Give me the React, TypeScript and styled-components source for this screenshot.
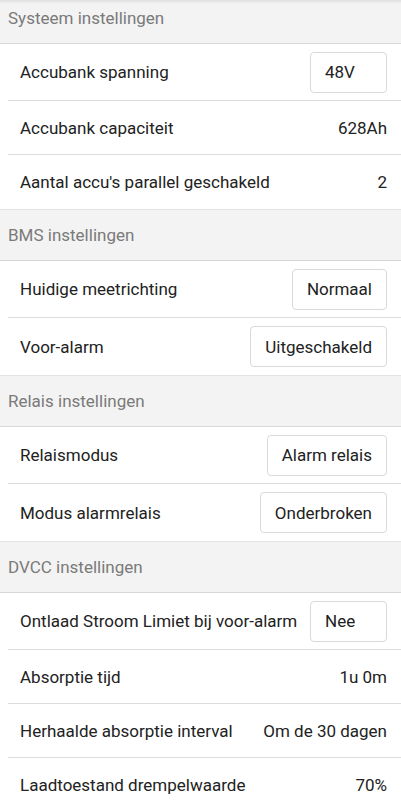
import React from 'react';
import styled, {createGlobalStyle} from 'styled-components';

const GlobalStyle = createGlobalStyle`
  html, body {
    margin: 0;
    padding: 0;
    background: #fff;
  }
  body {
    font-family: Roboto, "Liberation Sans", Arial, sans-serif;
    -webkit-font-smoothing: antialiased;
  }
`;

interface TItem {
  label: string;
  value: string;
  button?: boolean;
}

interface TGroup {
  title: string;
  items: TItem[];
}

const groups: TGroup[] = [
  {
    title: 'Systeem instellingen',
    items: [
      {label: 'Accubank spanning', value: '48V', button: true},
      {label: 'Accubank capaciteit', value: '628Ah'},
      {label: "Aantal accu's parallel geschakeld", value: '2'},
    ],
  },
  {
    title: 'BMS instellingen',
    items: [
      {label: 'Huidige meetrichting', value: 'Normaal', button: true},
      {label: 'Voor-alarm', value: 'Uitgeschakeld', button: true},
    ],
  },
  {
    title: 'Relais instellingen',
    items: [
      {label: 'Relaismodus', value: 'Alarm relais', button: true},
      {label: 'Modus alarmrelais', value: 'Onderbroken', button: true},
    ],
  },
  {
    title: 'DVCC instellingen',
    items: [
      {label: 'Ontlaad Stroom Limiet bij voor-alarm', value: 'Nee', button: true},
      {label: 'Absorptie tijd', value: '1u 0m'},
      {label: 'Herhaalde absorptie interval', value: 'Om de 30 dagen'},
      {label: 'Laadtoestand drempelwaarde', value: '70%'},
    ],
  },
];

const Page = styled.div`
  position: relative;
  margin-top: -8px;
  width: 100%;
  overflow: hidden;
`;

const TopShade = styled.div`
  position: fixed;
  top: 0;
  left: 0;
  right: 0;
  height: 4px;
  background: linear-gradient(rgba(0, 0, 0, 0.08), rgba(0, 0, 0, 0));
  z-index: 2;
`;

const Header = styled.div`
  box-sizing: border-box;
  height: 52px;
  display: flex;
  align-items: center;
  padding-left: 8px;
  background: #f3f3f3;
  border-top: 1px solid #e2e2e2;
  border-bottom: 1px solid #d8d8d8;
  color: #7a7a7a;
  font-size: 17px;
`;

const Row = styled.div<{$button?: boolean}>`
  box-sizing: border-box;
  height: ${p => (p.$button ? '57px' : '54px')};
  display: flex;
  align-items: center;
  justify-content: space-between;
  margin-left: 8px;
  padding: 0 14px 0 12px;
  border-bottom: 1px solid #dcdcdc;
  &:last-child {
    border-bottom: none;
  }
`;

const Label = styled.span`
  color: #222;
  font-size: 17px;
  white-space: nowrap;
`;

const Value = styled.span`
  color: #222;
  font-size: 17px;
  white-space: nowrap;
`;

const ValueButton = styled.button`
  box-sizing: border-box;
  height: 41px;
  min-width: 77px;
  padding: 0 14px;
  text-align: left;
  background: #fff;
  border: 1px solid #d9d9d9;
  border-radius: 4px;
  color: #222;
  font-family: inherit;
  font-size: 17px;
  cursor: pointer;
`;

function SettingRow(props: {item: TItem}) {
  const {item} = props;
  return (
    <Row $button={item.button}>
      <Label>{item.label}</Label>
      {item.button ? <ValueButton>{item.value}</ValueButton> : <Value>{item.value}</Value>}
    </Row>
  );
}

function SettingGroup(props: {group: TGroup}) {
  const {group} = props;
  return (
    <section>
      <Header>{group.title}</Header>
      {group.items.map(item => (
        <SettingRow key={item.label} item={item} />
      ))}
    </section>
  );
}

export default function App() {
  return (
    <>
      <GlobalStyle />
      <TopShade />
      <Page>
        {groups.map(g => (
          <SettingGroup key={g.title} group={g} />
        ))}
      </Page>
    </>
  );
}
